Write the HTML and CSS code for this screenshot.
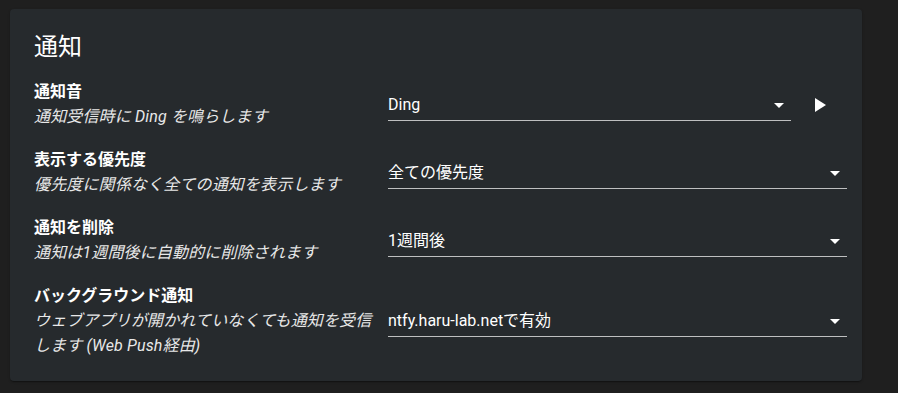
FILE: index.html
```html
<!DOCTYPE html>
<html lang="ja">
<head>
  <meta charset="UTF-8" />
  <meta name="viewport" content="width=device-width, initial-scale=1.0"/>
  <title>設定 - 通知</title>
  <link rel="stylesheet" href="styles.css">
</head>
<body>
  <div class="card">
    <h2 class="card-title">通知</h2>
    <div class="pref">
      <div class="pref-text">
        <div class="pref-label">通知音</div>
        <div class="pref-desc">通知受信時に Ding を鳴らします</div>
      </div>
      <div class="pref-control">
        <div class="select">
          <span class="select-value">Ding</span>
          <svg class="select-arrow" viewBox="0 0 24 24"><path d="M7 10l5 5 5-5z"/></svg>
        </div>
        <button class="play-btn" title="再生">
          <svg viewBox="0 0 24 24"><path d="M8 5v14l11-7z"/></svg>
        </button>
      </div>
    </div>
    <div class="pref">
      <div class="pref-text">
        <div class="pref-label">表示する優先度</div>
        <div class="pref-desc">優先度に関係なく全ての通知を表示します</div>
      </div>
      <div class="pref-control">
        <div class="select">
          <span class="select-value">全ての優先度</span>
          <svg class="select-arrow" viewBox="0 0 24 24"><path d="M7 10l5 5 5-5z"/></svg>
        </div>
      </div>
    </div>
    <div class="pref">
      <div class="pref-text">
        <div class="pref-label">通知を削除</div>
        <div class="pref-desc">通知は1週間後に自動的に削除されます</div>
      </div>
      <div class="pref-control">
        <div class="select">
          <span class="select-value">1週間後</span>
          <svg class="select-arrow" viewBox="0 0 24 24"><path d="M7 10l5 5 5-5z"/></svg>
        </div>
      </div>
    </div>
    <div class="pref">
      <div class="pref-text">
        <div class="pref-label">バックグラウンド通知</div>
        <div class="pref-desc">ウェブアプリが開かれていなくても通知を受信します (Web Push経由)</div>
      </div>
      <div class="pref-control">
        <div class="select">
          <span class="select-value">ntfy.haru-lab.netで有効</span>
          <svg class="select-arrow" viewBox="0 0 24 24"><path d="M7 10l5 5 5-5z"/></svg>
        </div>
      </div>
    </div>
  </div>
</body>
</html>
```

FILE: styles.css
```css
* { box-sizing: border-box; }
body {
  margin: 0;
  padding: 9px 36px 12px 10px;
  background-color: #1f1f1f;
  font-family: Roboto, "Noto Sans CJK JP", sans-serif;
  color: #fff;
}
.card {
  background-color: #262a2d;
  border-radius: 4px;
  box-shadow: 0 2px 1px -1px rgba(0,0,0,0.2), 0 1px 1px rgba(0,0,0,0.14), 0 1px 3px rgba(0,0,0,0.12);
  padding: 22px 15px 23px 24px;
}
.card-title {
  margin: 0 0 17px;
  font-size: 24px;
  font-weight: 400;
  line-height: 32px;
}
.pref {
  display: flex;
  align-items: center;
  margin-bottom: 19px;
}
.pref:last-child { margin-bottom: 0; }
.pref-text {
  width: 354px;
  flex-shrink: 0;
  padding-right: 6px;
}
.pref-label {
  font-size: 16px;
  font-weight: 700;
  line-height: 24px;
}
.pref-desc {
  font-size: 16px;
  font-style: italic;
  line-height: 25px;
  letter-spacing: 0.15px;
  color: #e8e8e8;
}
.pref-control {
  flex: 1;
  display: flex;
  align-items: center;
}
.select {
  flex: 1;
  position: relative;
  height: 32px;
  padding: 4px 24px 5px 0;
  border-bottom: 1px solid rgba(255,255,255,0.7);
  font-size: 16px;
  line-height: 23px;
}
.select-arrow {
  position: absolute;
  right: 0;
  top: 4px;
  width: 24px;
  height: 24px;
  fill: #fff;
}
.play-btn {
  width: 40px;
  height: 40px;
  margin: 0 8px 0 8px;
  padding: 8px;
  border: none;
  border-radius: 50%;
  background: none;
  cursor: pointer;
}
.play-btn svg {
  display: block;
  width: 24px;
  height: 24px;
  fill: #fff;
}
```
